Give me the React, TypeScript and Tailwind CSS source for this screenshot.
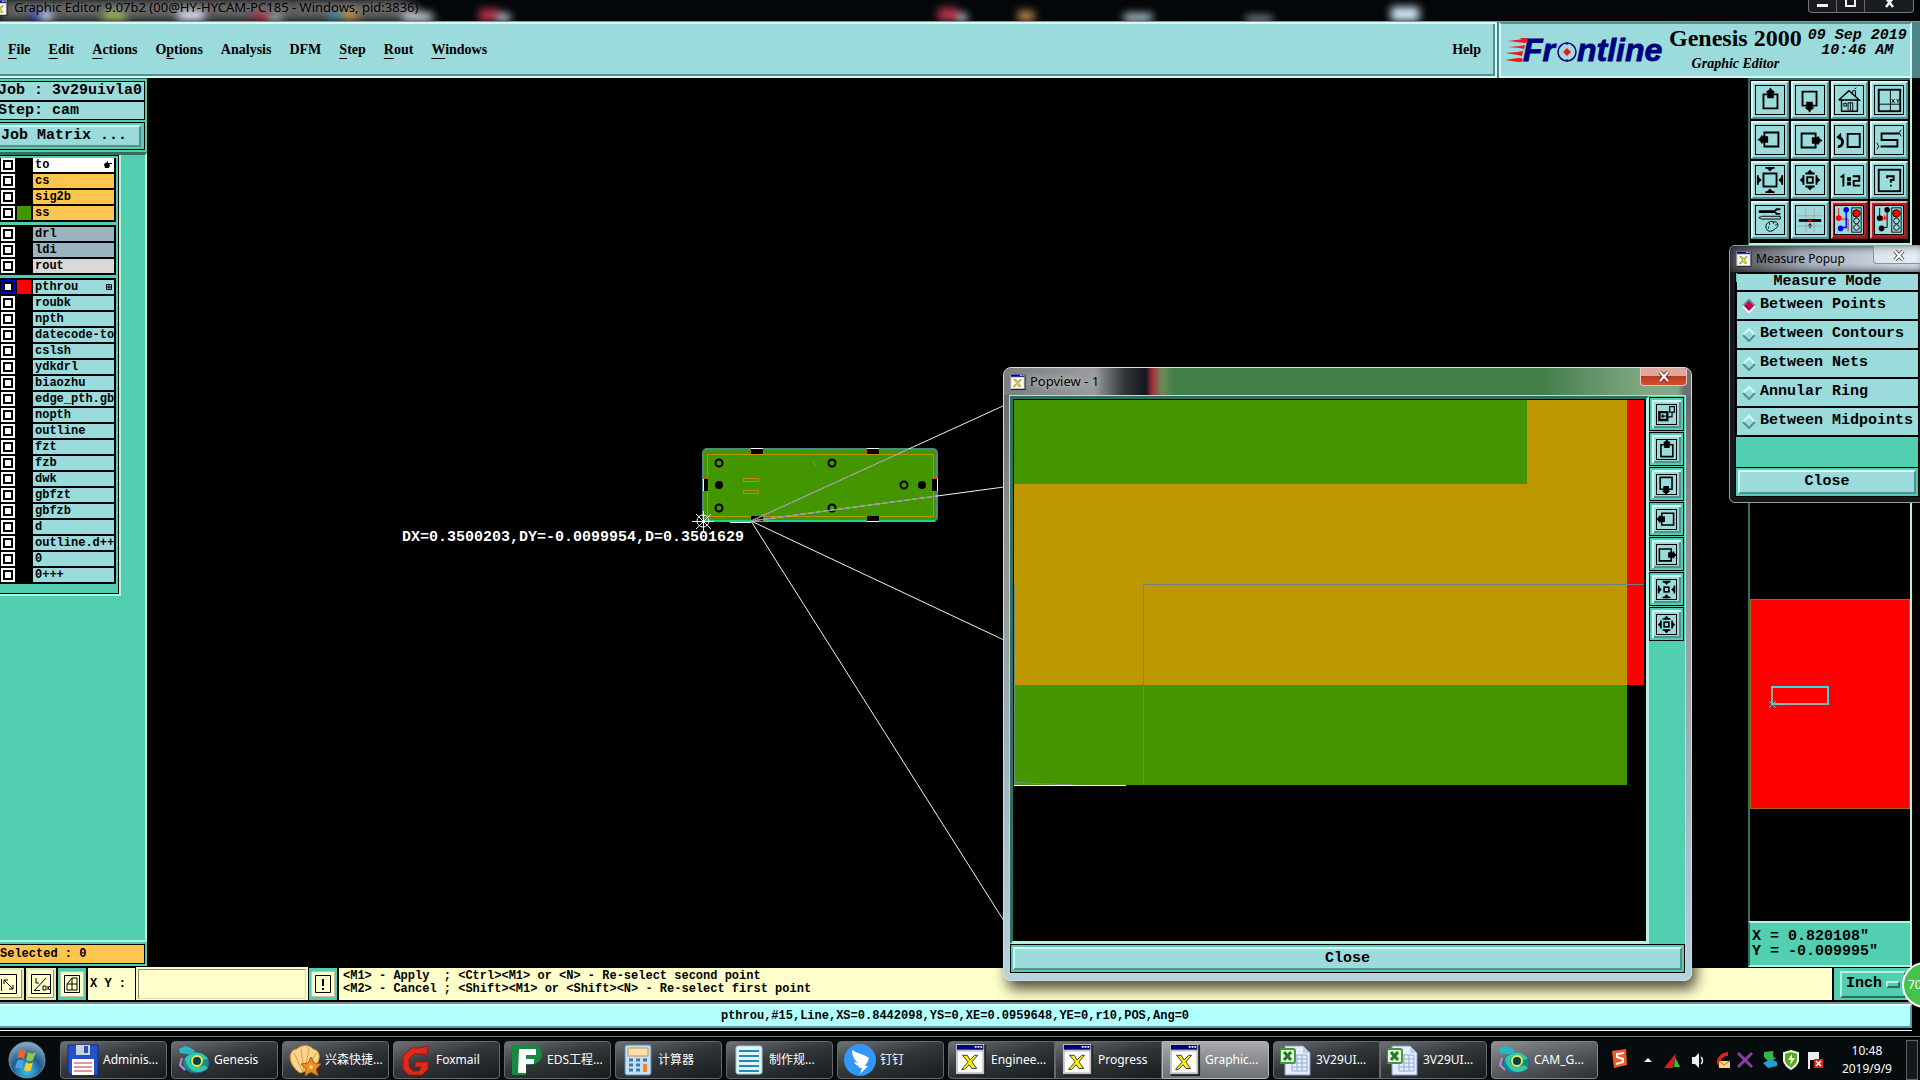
import type { ReactNode } from 'react';
import clsx from 'clsx';

const mono = "font-['Liberation_Mono','Noto_Sans_CJK_SC',monospace] font-bold";
const serif = "font-['Liberation_Serif',serif] font-bold";
const sans = "font-['Noto_Sans','Noto_Sans_CJK_SC',sans-serif]";

const raised =
  'border-2 border-t-[#d2fbf8] border-l-[#d2fbf8] border-r-[#568f90] border-b-[#568f90] bg-[#9bdbdb]';

const menus = [
  { label: 'File', key: 0 },
  { label: 'Edit', key: 0 },
  { label: 'Actions', key: 0 },
  { label: 'Options', key: 1 },
  { label: 'Analysis', key: -1 },
  { label: 'DFM', key: -1 },
  { label: 'Step', key: 0 },
  { label: 'Rout', key: 0 },
  { label: 'Windows', key: 0 },
];

type Layer = { name: string; bg: string; swatch?: string; active?: boolean; mark?: string };

const layerGroups: Layer[][] = [
  [
    { name: 'to', bg: 'bg-white', mark: 'hand' },
    { name: 'cs', bg: 'bg-[#fec64f]' },
    { name: 'sig2b', bg: 'bg-[#fec64f]' },
    { name: 'ss', bg: 'bg-[#fec64f]', swatch: 'bg-[#439600]' },
  ],
  [
    { name: 'drl', bg: 'bg-[#9bb4bf]' },
    { name: 'ldi', bg: 'bg-[#9bb4bf]' },
    { name: 'rout', bg: 'bg-[#d9d9d9]' },
  ],
  [
    { name: 'pthrou', bg: 'bg-[#9bdbdb]', swatch: 'bg-[#ff0000]', active: true, mark: 'grid' },
    ...[
      'roubk',
      'npth',
      'datecode-to',
      'cslsh',
      'ydkdrl',
      'biaozhu',
      'edge_pth.gbr',
      'nopth',
      'outline',
      'fzt',
      'fzb',
      'dwk',
      'gbfzt',
      'gbfzb',
      'd',
      'outline.d+++',
      '0',
      '0+++',
    ].map((name) => ({ name, bg: 'bg-[#9bdbdb]' })),
  ],
];

const measureModes = [
  'Between Points',
  'Between Contours',
  'Between Nets',
  'Annular Ring',
  'Between Midpoints',
];

function PanGlyph({ turn }: { turn: number }) {
  return (
    <g transform={`rotate(${turn} 15 15)`}>
      <path d="M8 9h15v15H8z" fill="none" stroke="#000" strokeWidth="2" />
      <path d="M15 2h1l1 2 3 2v1h-1v6h-7V7h-1V6l3-2z" />
    </g>
  );
}

function ArrowRing({ inward, box, far }: { inward?: boolean; box: number; far: number }) {
  return (
    <>
      <rect
        x={15 - box}
        y={15 - box}
        width={box * 2}
        height={box * 2}
        fill="none"
        stroke="#000"
        strokeWidth="2"
      />
      {[0, 90, 180, 270].map((turn) => (
        <g key={turn} transform={`rotate(${turn} 15 15)`}>
          {inward ? (
            <path d={`M10 ${far}h10v2h-2l-3 3-3-3h-2z`} />
          ) : (
            <path d={`M10 ${far + 5}h10v-2h-2l-3-3-3 3h-2z`} />
          )}
        </g>
      ))}
    </>
  );
}

function Lights() {
  return (
    <>
      <rect x="18" y="2" width="10" height="26" fill="none" stroke="#000" />
      <circle cx="23" cy="8" r="4" fill="#f00" stroke="#000" />
      <circle cx="23" cy="16" r="3" fill="none" stroke="#000" />
      <circle cx="23" cy="23" r="3" fill="none" stroke="#000" />
    </>
  );
}

const glyphs: Record<string, ReactNode> = {
  up: <PanGlyph turn={0} />,
  down: <PanGlyph turn={180} />,
  left: <PanGlyph turn={270} />,
  right: <PanGlyph turn={90} />,
  home: (
    <g fill="none" stroke="#000">
      <path d="M4 15 15 5l11 10H4M7 15v12h17V15" strokeWidth="1.5" />
      <path d="M14 27v-9h5v9M16.500 18v9M9.500 18.500h3v3h-3zM19 8V5h3v6M21 3l2-1" />
    </g>
  ),
  frame: (
    <g fill="none" stroke="#000">
      <rect x="4" y="4" width="23" height="23" strokeWidth="2" />
      <path d="M16.500 4v23M4 19.500h23M18 14l3 4m0-4-3 4M23 14l1.500 2L26 14M24.500 16v2" />
    </g>
  ),
  back: (
    <g fill="none" stroke="#000" strokeWidth="2">
      <path d="M13.500 8.500h13v14h-13z" />
      <path d="M3 22c6 1 7-9 1-10" strokeWidth="3" />
      <path d="M2 12l4-4v7z" fill="#000" strokeWidth="1" />
    </g>
  ),
  snake: (
    <g fill="none" stroke="#000">
      <path d="M26 8H7v7h17v7H6" strokeWidth="2" />
      <path d="M28 4l-2 3 2 4M2 18l2 4-2 3" />
    </g>
  ),
  zoomIn: <ArrowRing inward box={7} far={1} />,
  zoomOut: <ArrowRing box={3} far={4} />,
  zoomInSmall: <ArrowRing inward box={3} far={4} />,
  ratio: (
    <path
      d="M6 12l3-2v12M14 13h2v2h-2zM14 18h2v2h-2zM19 11h7v5h-6v5h7"
      fill="none"
      stroke="#000"
      strokeWidth="2"
    />
  ),
  help: (
    <g fill="none" stroke="#000" strokeWidth="2">
      <rect x="4" y="4" width="23" height="23" />
      <path d="M13 13v-2h7v4h-3v3M16 21h2" />
    </g>
  ),
  tools: (
    <g fill="none" stroke="#000">
      <path d="M3 6h17" strokeWidth="3" />
      <path d="M26 3.500h-4l-2 2.500 2 2.500h4" strokeWidth="2" />
      <path d="M3 12.500l3-1.500h20v3H6z" />
      <path d="M11 24c-2-5 4-9 8-7 5-1 6 5 2 7-3 3-8 5-10 0z" />
      <path d="M14 19h1M18 18h1M21 20h1M13 23h1" strokeWidth="2" />
    </g>
  ),
  grid: (
    <g fill="none">
      <path d="M10.500 2v26M19.500 2v26M2 10.500h26M2 21.500h26" stroke="#a9a3b4" />
      <path d="M3 15.500h24" stroke="#000" strokeWidth="3" />
      <path d="M13 15.500h4M15 13.500v4" stroke="#f00" />
      <path d="M15 19v5M13 21l2-2 2 2" stroke="#000" />
    </g>
  ),
  netColor: (
    <>
      <path d="M4 2v12h10v13" fill="none" stroke="#f00" />
      <path d="M12 4v19H7" fill="none" stroke="#00f" strokeWidth="1.500" />
      <circle cx="12" cy="4" r="3" fill="#00f" />
      <circle cx="4" cy="13" r="3" fill="#f00" />
      <circle cx="6" cy="24" r="3" fill="#00f" />
      <Lights />
    </>
  ),
  netPlain: (
    <>
      <path d="M5 2v12M13 4v19H7" fill="none" stroke="#000" />
      <path d="M8 13h5M8 11v5M10 10v5M12 10v5" stroke="#f00" />
      <circle cx="13" cy="4" r="3" />
      <circle cx="5" cy="13" r="3" />
      <circle cx="7" cy="24" r="3" />
      <Lights />
    </>
  ),
  popview: (
    <g fill="none" stroke="#000" strokeWidth="2">
      <path d="M6 12h10v10H6z" strokeWidth="3" />
      <path d="M19 5h6v7h-6zM22 12v6h-6M8 17h6M11 15l-2 2 2 2" strokeWidth="1.500" />
    </g>
  ),
};

const toolbar = [
  ['up', 'Pan up'],
  ['down', 'Pan down'],
  ['home', 'Home'],
  ['frame', 'Coordinates'],
  ['left', 'Pan left'],
  ['right', 'Pan right'],
  ['back', 'Previous view'],
  ['snake', 'Serpentine'],
  ['zoomIn', 'Zoom in'],
  ['zoomOut', 'Zoom out'],
  ['ratio', 'Scale one to two'],
  ['help', 'Query'],
  ['tools', 'Tools'],
  ['grid', 'Snap grid'],
  ['netColor', 'Net analysis'],
  ['netPlain', 'Check nets'],
];

const popTools = [
  ['popview', 'Link view'],
  ['up', 'Pan up'],
  ['down', 'Pan down'],
  ['left', 'Pan left'],
  ['right', 'Pan right'],
  ['zoomInSmall', 'Zoom in'],
  ['zoomOut', 'Zoom out'],
];

function XIcon({ className }: { className: string }) {
  return (
    <svg viewBox="0 0 32 34" className={className} aria-hidden="true">
      <path d="M1 1h31v33H1z" fill="#222" />
      <path d="M0 0h30v32H0z" fill="#c4c4c4" />
      <path d="M1 1h28v5H1z" fill="#00007c" />
      <path d="M20 3h2M23 3h2M26 3h2" stroke="#fff" strokeWidth="2" />
      <path d="M2 8h26v22H2z" fill="#fff" />
      <path d="M7 12h5l3 5 5-5h3l-6 7 5 7h-5l-3-4-5 5H6l7-8z" fill="#fff200" stroke="#333" />
    </svg>
  );
}

const taskIcons: Record<string, ReactNode> = {
  floppy: (
    <>
      <path d="M1 1h30v30H4l-3-3z" fill="#2450c8" stroke="#102a86" />
      <path d="M9 1h14v10H9z" fill="#c9d4dc" />
      <path d="M17 2h4v7h-4z" fill="#2450c8" />
      <path d="M5 15h22v16H5z" fill="#fff" />
      <path d="M7 19h18M7 23h18M7 27h18" stroke="#b33043" />
    </>
  ),
  genesis: (
    <>
      <path d="M1 5l6-3 6 2 4 3-3 4-6-1-6-1z" fill="#26b9c2" />
      <ellipse cx="18" cy="19" rx="13" ry="10" fill="#118d82" stroke="#2c5d9d" />
      <path d="M7 15c6-9 18-8 23 0l-5 1c-5-5-11-4-13 1 1 6 9 8 14 4l4 3c-8 7-20 5-23-9z" fill="#32c8a8" />
      <ellipse cx="19" cy="17" rx="5" ry="5" fill="#083d4e" stroke="#e9e54c" strokeWidth="2" />
      <path d="M4 14l-2 7 5 5" fill="none" stroke="#b98de0" strokeWidth="2" />
    </>
  ),
  shell: (
    <>
      <path d="M11 29C-1 21-2 6 8 5c5-5 13-4 16 0 9 2 8 13-1 20z" fill="#f9d58c" stroke="#d98d2d" />
      <path d="M14 28 5 9M15 28l-3-23M16 27l4-23M17 27 27 9" stroke="#dc9a45" />
      <path d="M22 13l3 6 7 1-5 5 2 7-7-4-6 4 1-7-5-5 7-1z" fill="#f08a22" stroke="#b45a0d" />
      <circle cx="22" cy="23" r="2" fill="#ffd58a" />
    </>
  ),
  foxmail: (
    <path
      d="M28 2l-1 8H14l-5 5v8l4 4h6l2-4h-6v-5h13v7l-6 6H9l-6-6V12l8-8 8 0z"
      fill="#dd2a1b"
      stroke="#a11410"
    />
  ),
  eds: (
    <>
      <path d="M1 1h20c14 1 13 20-3 20h-3v10H1z" fill="#148a42" />
      <path d="M8 5h17v6H15v4h8v5h-8v9H7z" fill="#fff" />
    </>
  ),
  calc: (
    <>
      <rect x="3" y="1" width="26" height="30" rx="2" fill="#c7e0f2" stroke="#558ab5" />
      <path d="M6 4h20v8H6z" fill="#fbe0ad" stroke="#d59034" />
      <path d="M7 16h4M14 16h4M21 16h4M7 21h4M14 21h4M7 26h4M14 26h4" stroke="#3c7ab1" strokeWidth="3" />
      <path d="M21 20h4v8h-4z" fill="#f08a22" />
    </>
  ),
  note: (
    <>
      <rect x="3" y="2" width="26" height="28" rx="2" fill="#e3f5fb" stroke="#9fcbdc" />
      <path d="M6 7h20M6 12h20M6 17h20M6 22h20M6 27h20" stroke="#2588b5" strokeWidth="2" />
    </>
  ),
  ding: (
    <>
      <circle cx="16" cy="16" r="16" fill="#3296fa" />
      <path d="M8 6c6 4 12 4 17 8-1 4-3 6-4 8h3l-8 8 2-6h-3c1-2-4-3-5-6l4 1c-4-3-6-8-6-13z" fill="#fff" />
    </>
  ),
  excel: (
    <>
      <path d="M5 2h18l7 7v22H5z" fill="#e8eefb" stroke="#7f9bd0" />
      <path d="M12 11h15v16H12zM12 15h15M12 19h15M12 23h15M17 11v16M22 11v16" fill="none" stroke="#8facdd" />
      <path d="M23 2v7h7z" fill="#bfd0ee" />
      <rect x="0" y="5" width="15" height="14" rx="2" fill="#e6f5e1" stroke="#3f9a3a" strokeWidth="2" />
      <path d="M4 8l7 8M11 8l-7 8" stroke="#257a25" strokeWidth="3" />
    </>
  ),
};

type Task = { label: string; icon: string; state?: 'active' | 'lit' };

const taskGroups: Task[][] = [
  [{ label: 'Adminis...', icon: 'floppy' }],
  [{ label: 'Genesis', icon: 'genesis' }],
  [{ label: '兴森快捷...', icon: 'shell' }],
  [{ label: 'Foxmail', icon: 'foxmail' }],
  [{ label: 'EDS工程...', icon: 'eds' }],
  [{ label: '计算器', icon: 'calc' }],
  [{ label: '制作规...', icon: 'note' }],
  [{ label: '钉钉', icon: 'ding' }],
  [
    { label: 'Enginee...', icon: 'x' },
    { label: 'Progress', icon: 'x' },
    { label: 'Graphic...', icon: 'x', state: 'active' },
  ],
  [
    { label: '3V29UI...', icon: 'excel' },
    { label: '3V29UI...', icon: 'excel' },
  ],
  [{ label: 'CAM_G...', icon: 'genesis', state: 'lit' }],
];

function TitleBar() {
  return (
    <div className={clsx(sans, 'relative flex h-[22px] shrink-0 overflow-hidden border-b border-[#8f9394] bg-[#04070a] text-[13px]')}>
      <svg className="absolute inset-0 h-full w-full blur-xs" aria-hidden="true">
        <path d="M0 0h400l40 21H0z" fill="#5c5c5c" />
        <path d="M28 21c0-16 24-16 24 0z" fill="#3846b0" />
        <path d="M40 12h12v10H40zM178 10h26v12h-26z" fill="#e6e9ff" />
        <path d="M101 21c0-14 27-14 27 0z" fill="#a8c860" />
        <path d="M251 12h18v9h-18zM479 9h20v12h-20zM938 8h20v13h-20z" fill="#b8354a" />
        <path d="M268 16h14v6h-14zM497 14h13v8h-13zM957 14h10v8h-10zM403 13h29v9h-29z" fill="#dff0ff" />
        <path d="M328 12h16v10h-16z" fill="#3794ad" />
        <path d="M342 9h16v12h-16zM1018 11h16v10h-16z" fill="#c8914c" />
        <path d="M1124 14h28v8h-28zM1391 7h28v15h-28zM1246 17h26v5h-26z" fill="#d3ecfb" />
      </svg>
      <h1 className="relative flex items-start font-normal leading-[14px] text-black">
        <XIcon className="mr-1.5 -ml-2 h-4 w-4" />
        <span className="[text-shadow:0_0_6px_#999]">
          Graphic Editor 9.07b2 (00@HY-HYCAM-PC185 - Windows, pid:3836)
        </span>
      </h1>
      <div className="relative mr-1.5 ml-auto flex h-[13px] rounded-b border border-t-0 border-[#777] bg-[#191d20]">
        <button aria-label="Minimize" className="flex w-7 justify-center border-r border-[#666]">
          <span className="mt-1 h-[3px] w-[11px] bg-gray-100" />
        </button>
        <button aria-label="Maximize" className="flex w-7 justify-center border-r border-[#666]">
          <span className="h-[7px] w-[11px] border-2 border-t-0 border-gray-100" />
        </button>
        <button aria-label="Close" className="flex w-12 justify-center">
          <svg width="11" height="8" aria-hidden="true">
            <path d="M2-2l7 9M9-2L2 7" stroke="#f3f3f3" strokeWidth="2.500" />
          </svg>
        </button>
      </div>
    </div>
  );
}

function FrontlineLogo() {
  return (
    <svg width="162" height="34" className="shrink-0" role="img" aria-label="Frontline">
      <g fill="#f01818">
        <path d="M3 7l16-2h3v3l-2 1zM3 13l12-1 5-1-1 4-4-1zM0 19l13-1 5-1-1 5-4-1zM0 26l13-2h4l-1 3-3 1z" />
        <path d="M15 4h8l-1 3h-4zM13 25h5l-1 3-5-1z" />
      </g>
      <g
        className="font-['Liberation_Sans',sans-serif] text-[32px] font-bold italic"
        fill="#000080"
        stroke="#000080"
        strokeWidth="0.800"
      >
        <text x="18" y="27">
          Fr
        </text>
        <text x="72" y="27">
          ntline
        </text>
      </g>
      <circle cx="62" cy="18" r="9" fill="#a4ddde" stroke="#000080" strokeWidth="1.500" />
      <path d="M62 14l4 4-4 4-4-4z" fill="#f01818" />
      <path d="M62 8v3M62 25v3" stroke="#000080" />
    </svg>
  );
}

function Header() {
  return (
    <header className="flex h-14 shrink-0 gap-0.5 bg-[#4b8588] pr-2">
      <nav
        className={clsx(
          serif,
          'flex flex-1 items-center gap-[18px] border-y-2 border-r-2 border-t-[#d2fbf8] border-r-[#d2fbf8] border-b-[#d2fbf8] bg-[#9bdbdb] pl-2 text-sm shadow-[inset_-2px_-2px_#568f90]'
        )}
      >
        {menus.map(({ label, key }) => (
          <button key={label} className="leading-5">
            {label.slice(0, Math.max(key, 0))}
            {key >= 0 && <span className="underline underline-offset-4">{label[key]}</span>}
            {label.slice(key + 1)}
          </button>
        ))}
        <button className="mr-3.5 ml-auto">Help</button>
      </nav>
      <div className="flex w-[413px] border-2 border-t-[#568f90] border-l-[#d2fbf8] border-r-[#d2fbf8] border-b-[#d2fbf8] bg-[#9bdbdb] pl-1">
        <div className="mt-2.5">
          <FrontlineLogo />
        </div>
        <div className={clsx(serif, 'ml-0.5 text-center whitespace-nowrap')}>
          <div className="text-2xl leading-7">Genesis 2000</div>
          <div className="text-sm leading-6 italic">Graphic Editor</div>
        </div>
        <div className={clsx(mono, 'ml-1.5 text-center text-[15px] leading-[15px] whitespace-pre italic')}>
          <div className="mt-1">09 Sep 2019</div>
          <div>10:46 AM</div>
        </div>
      </div>
    </header>
  );
}

function LayerRow({ layer }: { layer: Layer }) {
  return (
    <li className="flex h-3.5 gap-0.5">
      <label className={clsx('flex shrink-0 p-0.5', layer.active ? 'bg-[#0000c8]' : 'bg-white')}>
        <input
          type="checkbox"
          aria-label={`Select ${layer.name}`}
          className="size-2.5 appearance-none border-2 border-black bg-white"
        />
      </label>
      <span className={clsx('w-3.5 shrink-0', layer.swatch)} />
      <button
        className={clsx(
          mono,
          layer.bg,
          'flex min-w-0 flex-1 items-center justify-between overflow-hidden pl-0.5 text-xs leading-[14px] whitespace-nowrap'
        )}
      >
        {layer.name}
        {layer.mark === 'hand' && (
          <svg width="8" height="8" className="mr-0.5" aria-hidden="true">
            <path d="M0 3l3-2 1-1v2h4v1H5l1 1-1 3H1z" />
          </svg>
        )}
        {layer.mark === 'grid' && (
          <svg width="6" height="6" className="mr-0.5" aria-hidden="true">
            <path d="M.5.5h5v5h-5zM3 0v6M0 3h6" fill="none" stroke="#000" />
          </svg>
        )}
      </button>
    </li>
  );
}

function Sidebar() {
  return (
    <aside className="mb-0.5 flex w-[147px] shrink-0 flex-col border-t border-[#2f6f60] bg-[#52ceb0] pt-0.5">
      <dl className={clsx(mono, 'mr-0.5 text-[15px] leading-4 whitespace-pre')}>
        <div className="-ml-[3px] flex h-5 items-center border border-black bg-[#9bdbdb]">
          <dt>Job : </dt>
          <dd>3v29uivla0</dd>
        </div>
        <div className="-ml-[3px] flex h-[19px] items-center border border-black bg-[#9bdbdb]">
          <dt>Step: </dt>
          <dd>cam</dd>
        </div>
      </dl>
      <div className="mt-0.5 mr-0.5 -ml-px border border-black py-0.5 pr-[3px]">
        <button className={clsx(mono, raised, 'block h-[22px] w-full border-l-0 pl-px text-left text-[15px] leading-4')}>
          Job Matrix ...
        </button>
      </div>
      <div className="mt-0.5 flex flex-1 flex-col border-t-3 border-r-2 border-b-2 border-t-[#2f6f60] border-r-[#b4f2e2] border-b-[#b4f2e2]">
        <div className="w-[121px] border-r-2 border-b-2 border-[#b4f2e2]">
          <div className="flex flex-col gap-[3px] border-t border-r border-b border-black pt-0.5 pr-0.5 pb-[9px]">
            {layerGroups.map((group, i) => (
              <ul key={i} className="flex flex-col gap-0.5 bg-black py-0.5 pr-0.5 pl-px first:pt-0">
                {group.map((layer) => (
                  <LayerRow key={layer.name} layer={layer} />
                ))}
              </ul>
            ))}
          </div>
        </div>
      </div>
      <div className={clsx(mono, 'mt-0.5 mr-0.5 mb-0.5 -ml-px flex h-5 items-center border border-black bg-[#fec64f] text-xs whitespace-pre')}>
        Selected : 0
      </div>
    </aside>
  );
}

const holes = [
  [719, 463],
  [719, 508],
  [832, 463],
  [832, 508],
  [904, 485],
];

function DesignCanvas() {
  return (
    <main className="min-w-0 flex-1 overflow-hidden bg-black">
      <svg className="h-full w-full" role="img" aria-label="Board outline with measurement">
        <g transform="translate(-147 -78)">
          <rect x="703" y="449" width="234" height="72" rx="4" fill="#439600" stroke="#4c8a8a" strokeWidth="2" />
          <path d="M706 521h229" stroke="#1fd08a" strokeWidth="2" />
          <rect x="707.500" y="454.500" width="226" height="62" fill="none" stroke="#b89400" />
          <path d="M743.500 478.500h15v3h-15zM743.500 490.500h15v3h-15z" fill="none" stroke="#b89400" />
          <path d="M751 448h12v6h-12zM867 448h12v6h-12zM751 516h12v5h-12zM867 516h12v5h-12zM703 479h5v12h-5zM932 479h6v12h-6z" />
          <path d="M751 448.500h12M867 448.500h12M867 521.500h12M703.500 479v12M937.500 479v12" stroke="#fff" />
          <path d="M750.500 449v5M866.500 449v5M932 478.500h5M704 478.500h4" stroke="#c65a00" />
          {holes.map(([x, y]) => (
            <circle key={`${x}-${y}`} cx={x} cy={y} r="3.500" fill="none" stroke="#000" strokeWidth="2" />
          ))}
          <circle cx="719" cy="485" r="4" />
          <circle cx="922" cy="485" r="4" />
          <g stroke="#f4f4f4" fill="none">
            <path d="M751 521 1004 405.500M751 521l253-34M751 521l253 119M751 521l253 400M730 522.500h21" />
            <circle cx="703" cy="521" r="6" />
            <path d="M692 521.500h22M703.500 511v21M696 514l15 15M711 514l-15 15" />
          </g>
          <path d="M751 521l158-72.100M751 521l185-24.900" stroke="#8f8a94" />
          <path d="M813 462l3 4" stroke="#7d8f9a" />
          <text x="402" y="541" fill="#fff" className={clsx(mono, 'text-[15px]')}>
            DX=0.3500203,DY=-0.0099954,D=0.3501629
          </text>
        </g>
      </svg>
    </main>
  );
}

function ToolPanel() {
  return (
    <aside className="mr-2 mb-px flex w-[164px] shrink-0 flex-col border-r-2 border-[#b4f2e2] bg-black">
      <div className="grid grid-cols-4 gap-0.5 border-t-2 border-b-2 border-l-2 border-t-[#2f6f60] border-b-[#b4f2e2] border-l-[#2f6f60] pt-px pr-0.5 pb-1 pl-px">
        {toolbar.map(([id, label], i) => (
          <button
            key={id}
            aria-label={label}
            className={clsx(
              'flex h-[38px] items-center justify-center border-2',
              i > 13
                ? 'border-t-[#efb0b0] border-l-[#efb0b0] border-r-[#6d2525] border-b-[#6d2525] bg-[#b71f24]'
                : 'border-t-[#d2fbf8] border-l-[#d2fbf8] border-r-[#568f90] border-b-[#568f90] bg-[#9bdbdb]'
            )}
          >
            <svg viewBox="0 0 30 30" className="size-[30px] border border-black bg-[#9bdbdb]">
              {glyphs[id]}
            </svg>
          </button>
        ))}
      </div>
      <svg className="min-h-0 w-full flex-1 border-l-2 border-[#2f6f60]" role="img" aria-label="Overview">
        <g transform="translate(0 -245)">
          <rect x="0.500" y="599.500" width="159" height="209" fill="#f00" stroke="#a06a10" />
          <rect x="22" y="687" width="56" height="17" fill="none" stroke="#40d8e0" strokeWidth="2" />
          <path d="M22 688v16h56" fill="none" stroke="#a0a8a8" strokeWidth="2" />
          <path d="M19 701l7 7M26 701l-7 7M28 704.500h6" stroke="#50e0e8" />
        </g>
      </svg>
      <dl
        className={clsx(
          mono,
          'flex h-[46px] flex-col justify-center border-2 border-t-[#b4f2e2] border-r-0 border-b-[#b4f2e2] border-l-[#2f6f60] bg-[#52ceb0] pl-0.5 text-[15px] leading-[15px] whitespace-pre'
        )}
      >
        <div className="flex">
          <dt>X = </dt>
          <dd>0.820108"</dd>
        </div>
        <div className="flex">
          <dt>Y = </dt>
          <dd>-0.009995"</dd>
        </div>
      </dl>
    </aside>
  );
}

function MessageBar() {
  const snap = 'flex items-center justify-center border-2 border-[#e6e6b8] bg-[#ffffcc] shadow-[inset_-1px_-1px_#8d8d70]';
  return (
    <div className="flex h-8 shrink-0 gap-0.5 bg-black pr-2">
      <button aria-label="Snap to line" className={clsx(snap, 'w-6 border-l-0')}>
        <svg width="18" height="22" className="-ml-1" fill="none" stroke="#000" aria-hidden="true">
          <path d="M0 1.500h16.500v19H0M4 7l9 9M4 11V7h4M9 16h4v-4M1.500 6v12" />
        </svg>
      </button>
      <button aria-label="Snap to angle" className={clsx(snap, 'w-[30px]')}>
        <svg width="20" height="22" fill="none" stroke="#000" aria-hidden="true">
          <path d="M.5 1.500h19v19H.5zM5 5v5h3M3 18L15 5M3 17.500h6M12 13h3v4h-3zM17 13v4M19 13l-2 2 2 2" />
        </svg>
      </button>
      <button aria-label="Snap to grid" className="flex w-7 items-center justify-center bg-[#52ceb0]">
        <svg width="24" height="26" fill="#ffffcc" stroke="#000" aria-hidden="true">
          <path d="M0 0h24v26H0z" stroke="#8d8d70" />
          <path d="M4.500 4.500h15v17h-15zM7 13h10M12 7v12M7 13l5-6h5v12H7z" />
        </svg>
      </button>
      <label htmlFor="xy" className={clsx(mono, 'flex w-[47px] items-center bg-[#ffffcc] pl-0.5 text-xs whitespace-pre')}>
        X Y :
      </label>
      <input
        id="xy"
        className={clsx(mono, 'w-[170px] border-2 border-t-[#8d8d70] border-r-[#dcdcb0] border-b-[#dcdcb0] border-l-[#8d8d70] bg-[#ffffcc] px-2 text-xs outline-2 -outline-offset-1 outline-[#ffffcc]')}
      />
      <button aria-label="Alert" className="flex w-7 items-center justify-center bg-[#52ceb0]">
        <svg width="24" height="26" fill="#ffffcc" stroke="#000" aria-hidden="true">
          <path d="M0 0h24v26H0z" stroke="#8d8d70" />
          <path d="M4.500 4.500h15v17h-15z" />
          <path d="M12 8v7M12 17v2" strokeWidth="2" />
        </svg>
      </button>
      <p className={clsx(mono, 'flex-1 bg-[#ffffcc] pt-0.5 pl-1 text-xs leading-[13px] whitespace-pre')}>
        {'<M1> - Apply  ; <Ctrl><M1> or <N> - Re-select second point\n'}
        {'<M2> - Cancel ; <Shift><M1> or <Shift><N> - Re-select first point'}
      </p>
      <div className="flex w-[78px] items-center bg-[#52ceb0] px-1.5">
        <label className="relative flex h-[27px] w-full items-center border-2 border-t-[#b4f2e2] border-l-[#b4f2e2] border-r-[#2f6f60] border-b-[#2f6f60]">
          <select aria-label="Units" className={clsx(mono, 'w-full appearance-none pl-1 text-[15px] outline-none')}>
            <option>Inch</option>
          </select>
          <span className="absolute right-1 h-[7px] w-3.5 border-2 border-t-[#b4f2e2] border-l-[#b4f2e2] border-r-[#2f6f60] border-b-[#2f6f60]" />
        </label>
      </div>
    </div>
  );
}

function StatusBar() {
  return (
    <footer className="flex h-[39px] shrink-0 flex-col bg-black pt-0.5 pr-2">
      <div className="border-t-2 border-b border-t-[#7d8f94] border-b-[#d9ffff] pb-0.5">
        <div
          className={clsx(
            mono,
            'flex h-6 items-center justify-center border-2 border-l-0 border-t-[#dfffff] border-r-[#5f9a9c] border-b-[#5f9a9c] bg-[#b2ffff] text-xs'
          )}
        >
          pthrou,#15,Line,XS=0.8442098,YS=0,XE=0.0959648,YE=0,r10,POS,Ang=0
        </div>
      </div>
      <div className="mt-[5px] -mr-2 h-px bg-[#777d80]" />
    </footer>
  );
}

function MeasurePopup() {
  return (
    <section
      aria-label="Measure Popup"
      className="absolute top-[245px] left-[1729px] w-[196px] rounded-md border border-[#9a9d9f] bg-[#16191c] px-[5px] pb-[5px]"
    >
      <div className={clsx(sans, 'relative -mx-[5px] flex h-[26px] items-center overflow-hidden rounded-t-md pl-1.5 text-xs')}>
        <div className="absolute inset-0 bg-linear-to-r from-[#4b4d50] via-[#a9b1bd] via-40% to-[#dbe6f2] blur-xs" />
        <XIcon className="relative mr-1 h-4 w-4" />
        <h2 className="relative">Measure Popup</h2>
        <button
          aria-label="Close measure popup"
          className="absolute top-0 right-0 flex h-[18px] w-[51px] justify-center rounded-b border border-t-0 border-[#8b9198] bg-white/40 pt-1"
        >
          <svg width="12" height="11" aria-hidden="true">
            <path d="M2 1l8 9M10 1L2 10" stroke="#555" strokeWidth="4" />
            <path d="M2 1l8 9M10 1L2 10" stroke="#fff" strokeWidth="2" />
          </svg>
        </button>
      </div>
      <div className={clsx(mono, 'border border-black bg-[#52ceb0] text-[15px]')}>
        <fieldset className="flex flex-col gap-0.5 bg-black pb-0.5 pl-px">
          <legend className="mb-px w-full border-y border-black bg-[#9bdbdb] text-center leading-4">
            Measure Mode
          </legend>
          {measureModes.map((mode, i) => (
            <label key={mode} className="flex h-[27px] items-center gap-1 bg-[#9bdbdb] pl-[5px] whitespace-nowrap">
              <input
                type="radio"
                name="measure-mode"
                defaultChecked={i === 0}
                className="peer sr-only"
              />
              <svg width="14" height="14" className="shrink-0" aria-hidden="true">
                <path d="M1 7l6-6 6 6" fill="none" stroke={i === 0 ? '#568f90' : '#d2fbf8'} strokeWidth="2" />
                <path d="M1 7l6 6 6-6" fill="none" stroke={i === 0 ? '#f2ffff' : '#568f90'} strokeWidth="2" />
                {i === 0 && <path d="M7 2l5 5-5 5-5-5z" fill="#c4004a" />}
              </svg>
              {mode}
            </label>
          ))}
        </fieldset>
        <div className="h-[30px]" />
        <div className="border-t border-black p-0.5">
          <button className={clsx(raised, 'block h-6 w-full leading-5')}>Close</button>
        </div>
      </div>
    </section>
  );
}

function PopviewWindow() {
  return (
    <section
      aria-label="Popview - 1"
      className="absolute top-[367px] left-[1003px] w-[689px] rounded-lg border border-[#d5dde0] bg-linear-to-b from-[#666b6f] from-5% via-[#8b8f92] via-25% to-[#b5d3e0] px-[5px] pb-1.5 shadow-[4px_8px_14px_#000000b0]"
    >
      <div className={clsx(sans, 'relative -mx-[5px] flex h-[27px] items-center overflow-hidden rounded-t-lg pl-1.5 text-[13px]')}>
        <div className="absolute inset-0 bg-[linear-gradient(90deg,#7b7e80_0,#9a9c9e_90px,#33373b_120px,#15181c_142px,#a32c3c_148px,#6c8a58_158px,#437f4b_170px,#437f4b_540px,#82a884_640px,#82a884_674px,#6b7073_680px)]" />
        <XIcon className="relative mr-1 h-4 w-4" />
        <h2 className="relative [text-shadow:0_0_6px_#eee]">Popview - 1</h2>
        <button
          aria-label="Close popview"
          className="absolute top-0 right-1 flex h-[18px] w-[47px] items-center justify-center rounded-b border border-t-0 border-[#e8c8c0] bg-linear-to-b from-[#dca79c] from-45% via-[#b93a1f] via-50% to-[#d4502e]"
        >
          <svg width="12" height="11" aria-hidden="true">
            <path d="M2 1l8 9M10 1L2 10" stroke="#633" strokeWidth="4" />
            <path d="M2 1l8 9M10 1L2 10" stroke="#fff" strokeWidth="2" />
          </svg>
        </button>
      </div>
      <div className="border border-[#c8d4d6] bg-black">
        <div className="flex">
          <div className="min-w-0 flex-1 border-3 border-t-[#2f6f60] border-r-[#b4f2e2] border-b-[#b4f2e2] border-l-[#2f6f60] pt-px pl-px">
            <svg className="block h-[541px] w-full" role="img" aria-label="Zoomed board detail">
              <path d="M0 0h613v385H0z" fill="#439600" />
              <path d="M513 0h100v285H0V84h513z" fill="#bd9700" />
              <path d="M613 0h17v285h-17z" fill="#f00" />
              <path d="M129.500 385V184.500H630" fill="none" stroke="#6e7f8e" />
              <path d="M.5 185v200M0 382.500L60 385" fill="none" stroke="#7d8a7d" />
              <path d="M0 385.500h112" stroke="#fff" />
            </svg>
          </div>
          <div className="flex w-9 flex-col gap-px bg-[#52ceb0] pt-px pr-px">
            {popTools.map(([id, label]) => (
              <div key={label} className="h-[34px] border border-black">
                <button
                  aria-label={label}
                  className="flex h-full w-full items-center justify-center border-2 border-[#52ceb0] bg-[#9bdbdb] shadow-[inset_2px_2px_#d2fbf8,inset_-2px_-2px_#568f90]"
                >
                  <svg viewBox="3 3 24 24" className="size-[21px] border border-black">
                    {glyphs[id]}
                  </svg>
                </button>
              </div>
            ))}
          </div>
        </div>
        <div className="border border-black bg-[#52ceb0] p-0.5">
          <button className={clsx(mono, raised, 'block h-[23px] w-full text-[15px] leading-5')}>Close</button>
        </div>
      </div>
    </section>
  );
}

function Tray() {
  return (
    <div className="ml-auto flex items-center">
      <svg width="220" height="24" viewBox="0 0 220 24" role="img" aria-label="Notification icons">
        <path d="M2 3l14-2 1 16-13 3z" fill="#f05a28" />
        <path d="M14 5l-7 1v3l6 2v3l-7 2" fill="none" stroke="#fff" strokeWidth="2" />
        <path d="M34 14h8l-4-4z" fill="#fff" />
        <path d="M54 20l12-15-3 15z" fill="#e01b1b" />
        <path d="M65 9l5 10h-6z" fill="#28c840" />
        <path d="M82 9h3l4-4v15l-4-4h-3z" fill="#eee" />
        <path d="M91 9c2 2 2 5 0 7" fill="none" stroke="#eee" strokeWidth="1.500" />
        <path d="M118 4c-12 1-15 15-5 15h5v-6h-5v3c-4-1-2-8 5-8z" fill="#dc2418" />
        <path d="M109 13h11v7h-11z" fill="#f6d48a" />
        <path d="M109 13l5 4 6-4" fill="none" stroke="#a77727" />
        <path d="M128 5l14 14M142 5l-14 14" stroke="#8a3fa0" strokeWidth="3" />
        <path d="M154 4l9-1v5l3 3-8 2-4-4z" fill="#37b34a" />
        <path d="M153 15l8-4 6 3v4l-9 2z" fill="#21a0d6" />
        <path d="M181 3l7 2v8c-1 4-4 6-7 8-3-2-6-4-7-8V5z" fill="#58a91c" stroke="#f2f2f2" strokeWidth="2" />
        <path d="M182 6l-4 6h3l-1 5 5-7h-3z" fill="#fff" />
        <path d="M199 4v17" stroke="#eee" strokeWidth="2" />
        <path d="M200 4h9v8h-9z" fill="#eee" />
        <path d="M204 11h9v9h-9z" fill="#d6261d" />
        <path d="M206 13l5 5M211 13l-5 5" stroke="#fff" strokeWidth="1.500" />
      </svg>
      <time className="mr-3.5 ml-3 text-center text-xs leading-[18px]">
        10:48
        <br />
        2019/9/9
      </time>
      <button aria-label="Show desktop" className="h-10 w-3 border border-[#5c6266] bg-[#14181b]" />
    </div>
  );
}

function Taskbar() {
  return (
    <div className={clsx(sans, 'flex h-[41px] shrink-0 items-center bg-[#060b0e] pr-0.5 text-white')}>
      <button aria-label="Start" className="flex w-[60px] shrink-0 justify-start pl-2">
        <svg width="38" height="38" viewBox="0 0 38 38" aria-hidden="true">
          <defs>
            <radialGradient id="orb" cx="0.5" cy="0.8" r="0.8">
              <stop offset="0" stopColor="#39c5f3" />
              <stop offset="0.5" stopColor="#1f5c93" />
              <stop offset="1" stopColor="#8fb0c4" />
            </radialGradient>
          </defs>
          <circle cx="19" cy="19" r="18" fill="url(#orb)" stroke="#6c90a5" />
          <path d="M11 10c3-2 5-1 7 0l-2 8c-2-1-4-2-7 0z" fill="#f0622a" />
          <path d="M20 11c3 2 5 2 8 0l-3 8c-2 2-4 1-7 0z" fill="#96c83c" />
          <path d="M9 20c3-2 5-1 7 0l-2 8c-2-1-4-2-7 0z" fill="#4aa3e4" />
          <path d="M18 21c3 2 5 2 7 0l-2 8c-2 2-4 1-7 0z" fill="#fccb32" />
        </svg>
      </button>
      <div className="flex h-[38px] gap-1">
        {taskGroups.map((group, i) => (
          <div key={i} className="flex">
            {group.map((task, j) => (
              <button
                key={j}
                className={clsx(
                  'flex w-[107px] items-center gap-1 border pl-1.5 text-xs whitespace-nowrap',
                  task.state === 'active'
                    ? 'border-[#b5b7b9] bg-linear-to-b from-[#a8aaac] to-[#6e7174]'
                    : task.state === 'lit'
                      ? 'border-[#85888a] bg-linear-165 from-[#8e9092] to-[#2a2f33]'
                      : 'border-[#66696c] bg-linear-165 from-[#707375] via-[#34383b] via-45% to-[#161b1e]',
                  j === 0 && 'rounded-l-sm',
                  j === group.length - 1 && 'rounded-r-sm'
                )}
              >
                {task.icon === 'x' ? (
                  <XIcon className="h-8 w-8 shrink-0" />
                ) : (
                  <svg viewBox="0 0 32 32" className="size-8 shrink-0" aria-hidden="true">
                    {taskIcons[task.icon]}
                  </svg>
                )}
                {task.label}
              </button>
            ))}
          </div>
        ))}
      </div>
      <Tray />
    </div>
  );
}

export default function App() {
  return (
    <div className="relative flex h-screen flex-col overflow-hidden bg-black text-black">
      <TitleBar />
      <Header />
      <div className="flex min-h-0 flex-1">
        <Sidebar />
        <DesignCanvas />
        <ToolPanel />
      </div>
      <MessageBar />
      <StatusBar />
      <Taskbar />
      <PopviewWindow />
      <MeasurePopup />
      <div
        className={clsx(
          sans,
          'absolute -right-7 bottom-[72px] flex size-[46px] items-center rounded-full border-2 border-white bg-[#43c24c] pl-1 text-xs text-white'
        )}
      >
        70
      </div>
    </div>
  );
}
